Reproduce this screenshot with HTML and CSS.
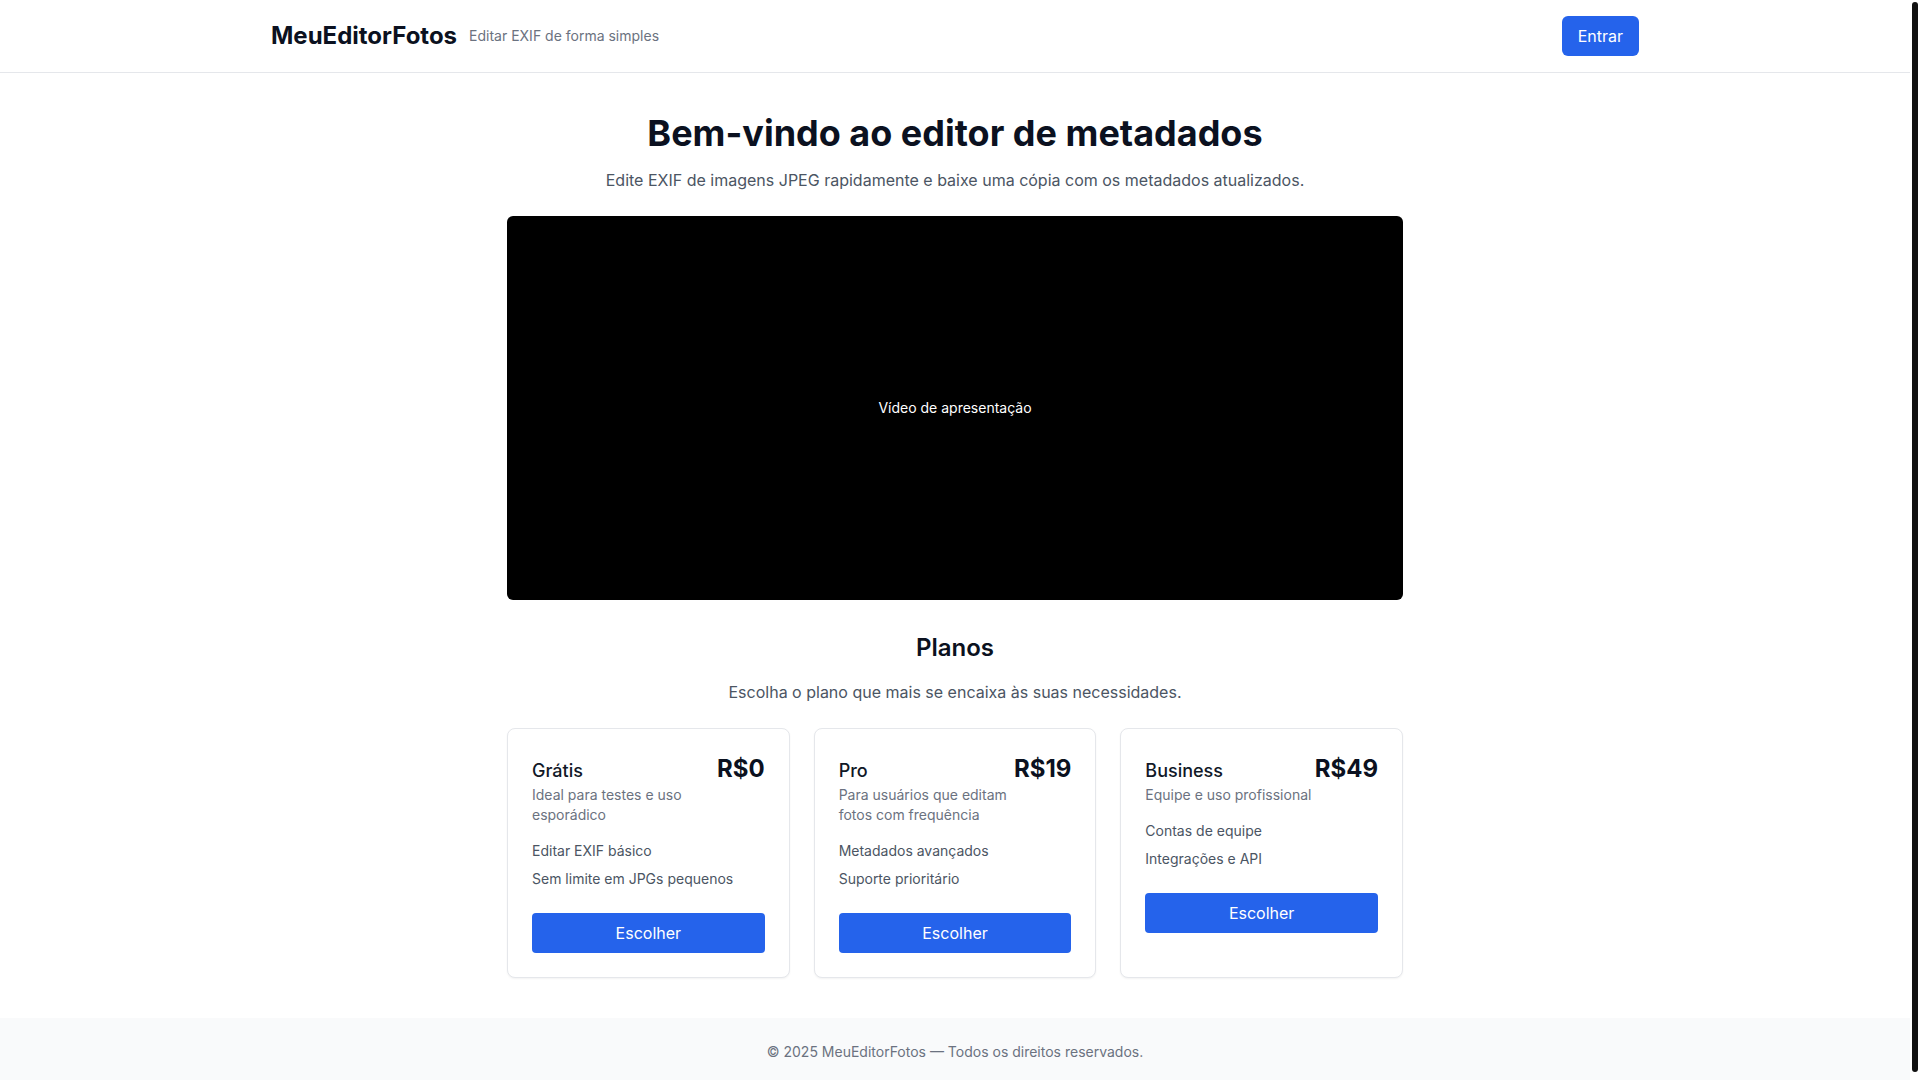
FILE: index.html
```html
<!DOCTYPE html>
<html lang="pt-BR">
<head>
<meta charset="utf-8">
<title>MeuEditorFotos</title>
<link rel="stylesheet" href="styles.css">
</head>
<body>
<header class="site-header">
  <div class="header-inner">
    <div class="brand">
      <span class="logo">MeuEditorFotos</span>
      <span class="tagline">Editar EXIF de forma simples</span>
    </div>
    <button class="btn-login">Entrar</button>
  </div>
</header>

<main class="main">
  <section class="hero">
    <h1 class="hero-title">Bem-vindo ao editor de metadados</h1>
    <p class="hero-sub">Edite EXIF de imagens JPEG rapidamente e baixe uma cópia com os metadados atualizados.</p>
    <div class="video">Vídeo de apresentação</div>
  </section>

  <section class="plans">
    <h2 class="plans-title">Planos</h2>
    <p class="plans-sub">Escolha o plano que mais se encaixa às suas necessidades.</p>
    <div class="plan-grid">
      <div class="card">
        <div class="card-head">
          <div class="card-info">
            <h3 class="card-name">Grátis</h3>
            <p class="card-desc">Ideal para testes e uso esporádico</p>
          </div>
          <div class="price">R$0</div>
        </div>
        <ul class="features">
          <li>Editar EXIF básico</li>
          <li>Sem limite em JPGs pequenos</li>
        </ul>
        <button class="btn-choose">Escolher</button>
      </div>
      <div class="card">
        <div class="card-head">
          <div class="card-info">
            <h3 class="card-name">Pro</h3>
            <p class="card-desc">Para usuários que editam fotos com frequência</p>
          </div>
          <div class="price">R$19</div>
        </div>
        <ul class="features">
          <li>Metadados avançados</li>
          <li>Suporte prioritário</li>
        </ul>
        <button class="btn-choose">Escolher</button>
      </div>
      <div class="card">
        <div class="card-head">
          <div class="card-info">
            <h3 class="card-name">Business</h3>
            <p class="card-desc card-desc-nowrap">Equipe e uso profissional</p>
          </div>
          <div class="price">R$49</div>
        </div>
        <ul class="features">
          <li>Contas de equipe</li>
          <li>Integrações e API</li>
        </ul>
        <button class="btn-choose">Escolher</button>
      </div>
    </div>
  </section>
</main>

<footer class="site-footer">© 2025 MeuEditorFotos — Todos os direitos reservados.</footer>
<div class="scroll-thumb" aria-hidden="true"></div>
</body>
</html>
```

FILE: styles.css
```css
* { box-sizing: border-box; }

html, body {
  margin: 0;
  padding: 0;
}

html {
  padding-right: 10px;
  background: #ffffff;
}

body {
  font-family: Inter, "Noto Sans", "Liberation Sans", sans-serif;
  color: #0b1120;
  background: #ffffff;
}

/* imitation of the browser scrollbar thumb seen in the reference */
.scroll-thumb {
  position: fixed;
  top: 2px;
  right: 2px;
  bottom: 8px;
  width: 6px;
  border-radius: 3px;
  background: #111111;
}

.site-header {
  border-bottom: 1px solid #e5e7eb;
}

.header-inner {
  max-width: 1400px;
  margin: 0 auto;
  padding: 0 16px;
  height: 72px;
  display: flex;
  align-items: center;
  justify-content: space-between;
}

.brand {
  display: flex;
  align-items: center;
  gap: 12px;
}

.logo {
  font-size: 24px;
  line-height: 32px;
  font-weight: 700;
  color: #0b1120;
}

.tagline {
  font-size: 14px;
  line-height: 20px;
  color: #6b7280;
}

.btn-login {
  font-family: inherit;
  font-size: 16px;
  line-height: 24px;
  height: 40px;
  padding: 0 16px;
  border: 0;
  border-radius: 6px;
  background: #2563eb;
  color: #ffffff;
}

.main {
  max-width: 896px;
  margin: 0 auto;
  padding: 40px 0 40px;
}

.hero {
  text-align: center;
}

.hero-title {
  margin: 0;
  font-size: 36px;
  line-height: 40px;
  font-weight: 700;
  color: #0b1120;
}

.hero-sub {
  margin: 15px 0 0;
  font-size: 16px;
  line-height: 24px;
  color: #4b5563;
}

.video {
  margin-top: 24px;
  height: 384px;
  background: #000000;
  border-radius: 6px;
  display: flex;
  align-items: center;
  justify-content: center;
  color: #ffffff;
  font-size: 14px;
  line-height: 20px;
}

.plans {
  margin-top: 32px;
  text-align: center;
}

.plans-title {
  margin: 0;
  font-size: 24px;
  line-height: 32px;
  font-weight: 600;
  color: #0b1120;
}

.plans-sub {
  margin: 16px 0 0;
  font-size: 16px;
  line-height: 24px;
  color: #4b5563;
}

.plan-grid {
  margin-top: 24px;
  display: grid;
  grid-template-columns: repeat(3, 1fr);
  gap: 24px;
  text-align: left;
}

.card {
  border: 1px solid #e5e7eb;
  border-radius: 8px;
  padding: 24px;
  background: #ffffff;
  box-shadow: 0 1px 2px rgba(0, 0, 0, 0.05);
}

.card-head {
  display: flex;
  align-items: baseline;
  justify-content: space-between;
}

.card-info {
  min-width: 0;
}

.card-name {
  margin: 0;
  font-size: 18px;
  line-height: 28px;
  font-weight: 500;
  color: #111827;
}

.card-desc {
  margin: 0;
  font-size: 14px;
  line-height: 20px;
  color: #6b7280;
}

.card-desc-nowrap {
  white-space: nowrap;
}

.price {
  flex-shrink: 0;
  font-size: 24px;
  line-height: 32px;
  font-weight: 700;
  color: #0b1120;
}

.features {
  list-style: none;
  margin: 16px 0 0;
  padding: 0;
  display: flex;
  flex-direction: column;
  gap: 8px;
  font-size: 14px;
  line-height: 20px;
  color: #4b5563;
}

.btn-choose {
  display: block;
  width: 100%;
  margin-top: 24px;
  height: 40px;
  border: 0;
  border-radius: 4px;
  background: #2563eb;
  color: #ffffff;
  font-family: inherit;
  font-size: 16px;
  line-height: 24px;
}

.site-footer {
  background: #f9fafb;
  padding: 24px 16px;
  text-align: center;
  font-size: 14px;
  line-height: 20px;
  color: #6b7280;
}
```
